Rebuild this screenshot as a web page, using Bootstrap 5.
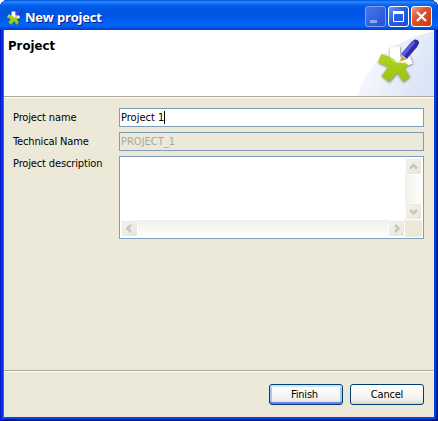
<!DOCTYPE html>
<html lang="en">
<head>
<meta charset="utf-8">
<title>New project</title>
<link href="https://cdn.jsdelivr.net/npm/bootstrap@5.3.0/dist/css/bootstrap.min.css" rel="stylesheet">
<style>
body{margin:0;background:#fff;font-family:"DejaVu Sans Condensed","DejaVu Sans",sans-serif;font-stretch:condensed;font-size:11px;line-height:14px;color:#000;overflow:hidden}
.win{width:438px;height:421px;border-radius:8px 8px 0 0;background:#0831d9;overflow:hidden;padding:0 4px 4px;box-shadow:inset 1px 0 #0019cf,inset -1px 0 #00138c,inset 0 -1px #00138c,inset 3px 0 #0831d9,inset -2px 0 #001ea0,inset 0 -2px #001ea0,inset 4px 0 #166aee,inset -4px 0 #0040e0,inset 0 -4px #0046e4}
.titlebar{height:30px;margin:0 -4px;padding:3px 6px 0 6px;background:linear-gradient(#0050d8 0,#2a8cff 2px,#0a6cf4 4px,#0058e6 7px,#0054e3 14px,#0260f4 22px,#0465fb 26px,#0050dc 28px,#0040c4 30px)}
.caption-text{font:bold 13px/18px "Open Sans","Noto Sans",sans-serif;color:#fff;text-shadow:1px 1px #0a1883;margin-left:3px;letter-spacing:-.2px}
.capbtn{width:21px;height:21px;border:1px solid #fff;border-radius:3px;background:linear-gradient(135deg,#6a98f4,#2a5ee0 45%,#1c4cd4);display:block;padding:0}
.capbtn svg{display:block}
.capbtn.off{border-color:#7f9df0;background:linear-gradient(135deg,#4876ec,#2450d4)}
.capbtn.shut{background:linear-gradient(135deg,#f0a088,#e0502c 40%,#c83c14)}
.banner{height:68px;border-bottom:1px solid #fff;box-shadow:inset 0 -1px #aca899;background:#fff}
.banner h1{font:bold 13px/17px "DejaVu Sans Condensed",sans-serif;font-stretch:condensed;margin:7px 0 0 4px;letter-spacing:.05px}
.pane{height:273px;background:#ece9d8;padding:10px 10px 0 9px;border-bottom:1px solid #aca899}
.form-line{margin-bottom:5px}
.tag{width:106px;flex:none;padding-top:3px;letter-spacing:-.14px}
.tag.high{padding-top:1px}
.field{width:305px;height:19px;border:1px solid #7f9db9;background:#fff;padding:2px 1px}
.field.dim{background:#ece9d8;color:#aca899}
.caret{width:1px;height:13px;background:#000}
.area{width:305px;height:83px;border:1px solid #7f9db9;background:#fff;display:grid;grid-template-columns:1fr 17px;grid-template-rows:1fr 17px;padding:1px}
.sv{background:linear-gradient(90deg,#f1efe9,#fefefc)}
.sh{background:linear-gradient(#f1efe9,#fefefc)}
.corner{background:#ece9d8}
.sb{width:17px;height:17px;border:1px solid #fff;border-radius:3px;background:linear-gradient(135deg,#f5f4ee,#e7e5db);box-shadow:inset 0 0 0 1px #ebe9df,inset -1px -1px #c9c6b6;display:block}
.sb svg{display:block}
.foot{height:46px;background:#ece9d8;border-top:1px solid #fff;padding:12px 10px 0 0;gap:7px}
.xp{width:74px;height:21px;border:1px solid #003c74;border-radius:3px;background:linear-gradient(#fff,#f4f3ee 70%,#e8e5da 88%,#d6d0c5);font-size:11px;line-height:14px;padding:1px 0 0;color:#000;letter-spacing:-.2px}
.xp.main{padding:1px 3px 0 0;box-shadow:inset 0 2px #cee7ff,inset 0 -2px #6982ee,inset 2px 0 #a8c4f6,inset -2px 0 #a8c4f6}
</style>
</head>
<body>
<div class="win d-flex flex-column">
 <div class="titlebar d-flex align-items-center flex-shrink-0">
  <svg width="16" height="16" viewBox="1 1 43 43"><use href="#logo"/></svg>
  <span class="caption-text">New project</span>
  <div class="d-flex ms-auto" style="gap:2px">
   <span class="capbtn off"><svg width="19" height="19"><path d="M4 13h7v3H4z" fill="#8fa9ef"/></svg></span>
   <span class="capbtn"><svg width="19" height="19"><path d="M4.500 5v9.500h10V5" fill="none" stroke="#fff"/><path d="M4 4h11v3H4z" fill="#fff"/></svg></span>
   <span class="capbtn shut"><svg width="19" height="19"><path d="M5 5l9 9M14 5l-9 9" stroke="#fff" stroke-width="2.2"/></svg></span>
  </div>
 </div>
 <div class="banner d-flex justify-content-between flex-shrink-0">
  <h1>Project</h1>
  <svg width="130" height="66" viewBox="304 30 130 66">
   <defs>
    <linearGradient id="sky" x1="0" x2="1" y1=".2" y2=".6"><stop offset="0" stop-color="#fcfdff"/><stop offset="1" stop-color="#dae4f6"/></linearGradient>
    <linearGradient id="leaf" x1="0" x2="0" y1="0" y2="1"><stop offset="0" stop-color="#aed41f"/><stop offset="1" stop-color="#9cc414"/></linearGradient>
    <filter id="soft" x="-20%" y="-20%" width="140%" height="140%"><feDropShadow dx=".5" dy=".8" stdDeviation="1" flood-color="#444" flood-opacity=".75"/></filter>
    <g id="logo">
     <g filter="url(#soft)">
      <path d="M16 7.500h10V18l9-2.500 3.500 9-9.500 4L24 31l-8-7z" fill="#fff"/>
      <path d="M7.500 15l9 3.500q4 1 6 4.500 7-1 12 3l-4.500 2.500 5.500 9L29 43l-6-9.500-8 9.500L7.500 37 14 28 4 23.500z" fill="url(#leaf)"/>
     </g>
     <path d="M17 20q4.500 4.500 9 3.500 5 0 8 .5" fill="none" stroke="#e6f3b0"/>
     <path d="M26 22.500l1.500-6 5 4z" fill="#c9a536"/>
     <path d="M30 17.500L41 4.500" stroke="#302ba8" stroke-width="7.400"/>
     <path d="M39.500 6.500L41.500 4" stroke="#302ba8" stroke-width="6.800" stroke-linecap="round"/>
     <path d="M29.500 15.500L39.500 3.500" stroke="#5f5ae8" stroke-width="3" stroke-linecap="round"/>
    </g>
   </defs>
   <path d="M358 96C366 68 384 43 434 31v65z" fill="url(#sky)"/>
   <svg x="374" y="34" width="50" height="54" viewBox="0 -5 50 54"><use href="#logo"/></svg>
  </svg>
 </div>
 <div class="pane flex-shrink-0">
  <div class="form-line d-flex"><label class="tag">Project name</label><div class="field d-flex">Project 1<span class="caret"></span></div></div>
  <div class="form-line d-flex"><label class="tag">Technical Name</label><div class="field dim">PROJECT_1</div></div>
  <div class="d-flex"><label class="tag high">Project description</label>
   <div class="area">
    <div></div>
    <div class="sv d-flex flex-column justify-content-between">
     <span class="sb"><svg width="15" height="15"><path d="M4 9.500L7.500 6 11 9.500" fill="none" stroke="#c9c7ba" stroke-width="2.600"/></svg></span>
     <span class="sb"><svg width="15" height="15"><path d="M4 6l3.500 3.500L11 6" fill="none" stroke="#c9c7ba" stroke-width="2.600"/></svg></span>
    </div>
    <div class="sh d-flex justify-content-between">
     <span class="sb"><svg width="15" height="15"><path d="M9 4L5.500 7.500 9 11" fill="none" stroke="#c9c7ba" stroke-width="2.600"/></svg></span>
     <span class="sb"><svg width="15" height="15"><path d="M6 4l3.500 3.500L6 11" fill="none" stroke="#c9c7ba" stroke-width="2.600"/></svg></span>
    </div>
    <div class="corner"></div>
   </div>
  </div>
 </div>
 <div class="foot d-flex justify-content-end flex-shrink-0">
  <button class="xp main">Finish</button>
  <button class="xp">Cancel</button>
 </div>
</div>
<script src="https://cdn.jsdelivr.net/npm/bootstrap@5.3.0/dist/js/bootstrap.bundle.min.js"></script>
</body>
</html>
